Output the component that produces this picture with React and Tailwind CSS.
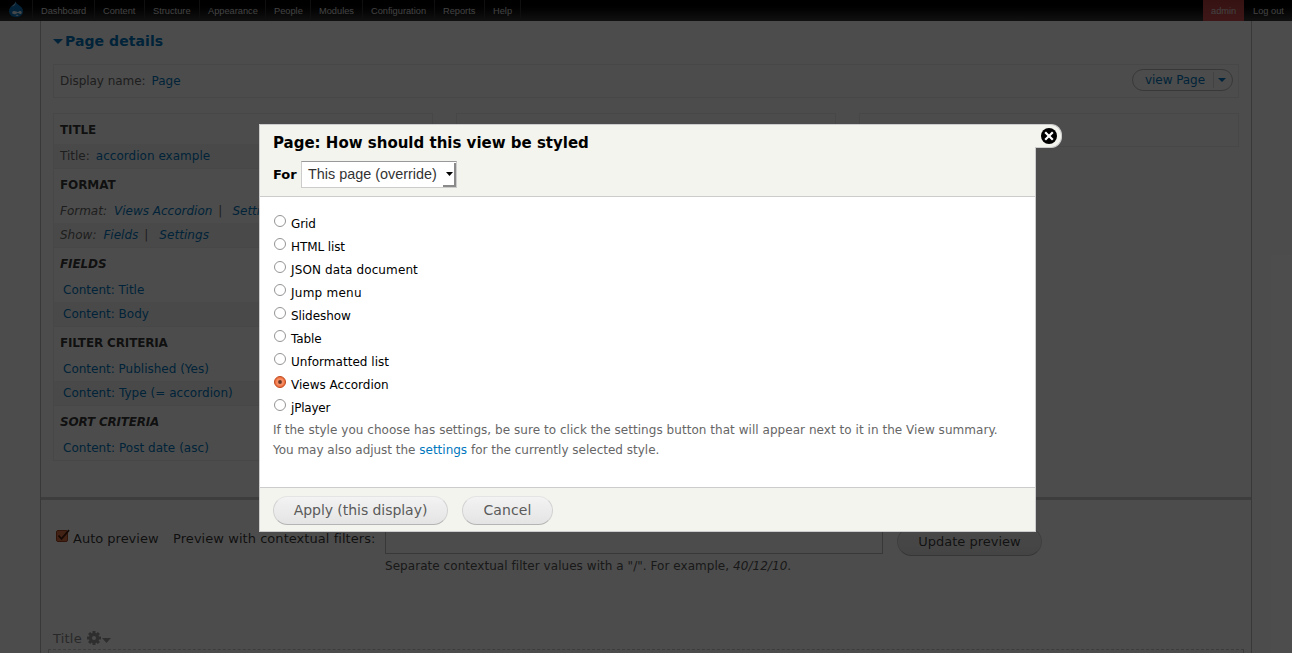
import React from "react";

const MENU = [
  ["Dashboard", "w-[62px]"],
  ["Content", "w-[50px]"],
  ["Structure", "w-[55px]"],
  ["Appearance", "w-[66px]"],
  ["People", "w-[45px]"],
  ["Modules", "w-[52px]"],
  ["Configuration", "w-[72px]"],
  ["Reports", "w-[50px]"],
  ["Help", "w-[37px] border-r"],
];

const STYLES = [
  ["Grid", "tracking-[-0.1px]"],
  ["HTML list", "tracking-[-0.1px]"],
  ["JSON data document", "tracking-[0.12px]"],
  ["Jump menu", "tracking-[0.25px]"],
  ["Slideshow", "tracking-[-0.06px]"],
  ["Table", "tracking-[-0.1px]"],
  ["Unformatted list", "tracking-[0.03px]"],
  ["Views Accordion", ""],
  ["jPlayer", "tracking-[-0.2px]"],
];

function Link({ children, className = "" }) {
  return (
    <a href="#" className={`text-[#0077be] ${className}`}>
      {children}
    </a>
  );
}

function DropletLogo() {
  return (
    <svg className="mb-[3px] ml-[8px] h-[17px] w-[16px] shrink-0" viewBox="0 0 16 17">
      <path
        d="M7.6 0.6C8 2.2 9.4 3.1 11 4.2C13.400 5.800 15 7.500 15 10.300C15 13.900 12 16.200 8.200 16.200C4.200 16.200 1 13.800 1 10.100C1 7.300 2.800 5.500 4.800 4.200C6.400 3.100 7.300 2.200 7.600 0.600Z"
        fill="#0a74bb"
      />
      <path d="M7.600 0.600C7.500 2.600 5 4.200 3.300 5.800L6.200 4.700C7.500 3.800 8 2.200 7.600 0.600Z" fill="#9fc9e6" />
      <path
        d="M4.200 11.600C4.600 10 6.700 9.700 8.300 10.600C9.300 11.200 9.700 11.300 10.800 10.500C12.200 9.600 13.800 10.100 13.700 11.700C13.600 13.100 12 13.300 10.800 12.500C9.800 11.900 9.400 12 8.300 12.700C6.500 13.800 3.900 13.300 4.200 11.600Z"
        fill="#e4eef5"
      />
      <path d="M7.500 14.300C8.600 13.700 9.600 13.700 10.800 14.300C10 15.200 8.500 15.200 7.500 14.300Z" fill="#cfe2ef" />
    </svg>
  );
}

function Toolbar() {
  return (
    <nav className="flex h-[21px] items-center bg-gradient-to-b from-black to-[#3a3a3a] font-['Liberation_Sans',sans-serif] text-[9.25px] text-[#ddd]">
      <DropletLogo />
      <ul className="ml-[8px] flex h-full">
        {MENU.map(([label, cls]) => (
          <li key={label} className={`flex h-full items-center border-l border-[#353535] pt-[2px] pl-[8px] ${cls}`}>
            {label}
          </li>
        ))}
      </ul>
      <div className="ml-auto flex h-full">
        <span className="flex w-[41px] items-center bg-gradient-to-b from-[#b83e3e] to-[#cf5050] pt-[2px] pl-[8px]">admin</span>
        <span className="flex w-[48px] items-center pt-[2px] pl-[9px]">Log out</span>
      </div>
    </nav>
  );
}

function Section({ title, className = "", children }) {
  return (
    <section className="border-b border-[#ededed]">
      <h3 className={`h-[30px] pl-[6px] text-[12px] leading-[33px] font-bold text-black/80 ${className}`}>{title}</h3>
      {children}
    </section>
  );
}

function Row({ shaded, italic, inset, children }) {
  return (
    <div
      className={`h-[24px] leading-[24px] whitespace-pre ${shaded ? "bg-[#f6f6f6]" : ""} ${italic ? "italic" : ""} ${
        inset ? "pl-[9px]" : "pl-[6px]"
      }`}
    >
      {children}
    </div>
  );
}

function Columns() {
  return (
    <div className="mt-[15px] flex h-[382px] items-start gap-[23px] text-[12px] text-[#666]">
      <div className="h-[348px] w-[380px] border border-b-0 border-[#ededed]">
        <Section title="TITLE" className="tracking-[-0.1px]">
          <Row shaded>
            Title:<Link className="ml-[6px] tracking-[0.03px]">accordion example</Link>
          </Row>
        </Section>
        <Section title="FORMAT" className="tracking-[-0.1px]">
          <Row italic>
            Format:<Link className="ml-[7px]">Views Accordion</Link>
            <span className="ml-[6px]">|</span>
            <Link className="ml-[10px]">Settings</Link>
          </Row>
          <Row italic shaded>
            Show:<Link className="ml-[7px]">Fields</Link>
            <span className="ml-[6px]">|</span>
            <Link className="ml-[11px] tracking-[0.06px]">Settings</Link>
          </Row>
        </Section>
        <Section title="FIELDS" className="tracking-[-0.1px] italic">
          <Row inset>
            <Link>Content: Title</Link>
          </Row>
          <Row inset shaded>
            <Link>Content: Body</Link>
          </Row>
        </Section>
        <Section title="FILTER CRITERIA" className="tracking-[-0.15px]">
          <Row inset>
            <Link>Content: Published (Yes)</Link>
          </Row>
          <Row inset shaded>
            <Link className="tracking-[0.04px]">Content: Type (= accordion)</Link>
          </Row>
        </Section>
        <Section title="SORT CRITERIA" className="tracking-[-0.2px] italic">
          <Row inset>
            <Link className="tracking-[0.04px]">Content: Post date (asc)</Link>
          </Row>
        </Section>
      </div>
      <div className="h-[34px] w-[380px] border border-[#ededed]" />
      <div className="h-[34px] w-[380px] border border-[#ededed]" />
    </div>
  );
}

function PillButton({ children, className = "" }) {
  return (
    <button
      className={`flex h-[29px] items-center justify-center rounded-full border border-[#d2d2d2] border-t-[#e4e4e4] border-b-[#b4b4b4] bg-gradient-to-b from-[#f3f3f3] to-[#e4e4e4] text-[#5a5a5a] ${className}`}
    >
      {children}
    </button>
  );
}

function GearIcon() {
  return (
    <svg className="ml-[5px] h-[14px] w-[14px]" viewBox="-7 -7 14 14" fill="#999">
      {[0, 45, 90, 135].map((a) => (
        <rect key={a} x="-1.500" y="-7" width="3" height="14" transform={`rotate(${a})`} />
      ))}
      <circle r="5.200" />
      <circle r="2" fill="#fff" />
    </svg>
  );
}

function Preview() {
  return (
    <div className="flex flex-1 flex-col text-[13px] text-black/80">
      <div className="flex h-[56px] items-end pl-[15px]">
        <svg className="mb-[13px] h-[14px] w-[14px] shrink-0" viewBox="0 0 14 14">
          <rect x="0.500" y="1.500" width="11" height="11" rx="1.500" fill="#e0724c" stroke="#a3441f" />
          <path d="M2.500 6.500L5.500 9.800L13 1.200" fill="none" stroke="#4a2010" strokeWidth="1.800" />
        </svg>
        <span className="ml-[3px] leading-[34px] whitespace-nowrap">Auto preview</span>
        <span className="ml-[14.5px] leading-[34px] tracking-[0.05px] whitespace-nowrap">Preview with contextual filters:</span>
        <div className="mb-[2px] ml-auto h-[27px] w-[498px] shrink-0 border border-[#bbb]" />
        <PillButton className="mr-[209px] ml-[14px] w-[145px] shrink-0 text-black/75">Update preview</PillButton>
      </div>
      <p className="pl-[344px] text-[12px] leading-[20px] tracking-[0.05px] text-[#555]">
        Separate contextual filter values with a "/". For example, <em>40/12/10</em>.
      </p>
      <div className="mt-[52px] flex h-[20px] items-center pl-[12px] tracking-[0.2px] text-[#888]">
        <span className="mt-px">Title</span>
        <GearIcon />
        <svg className="mt-[5px] ml-px h-[5px] w-[9px]" viewBox="0 0 9 5">
          <path d="M0 0H9L4.500 5Z" fill="#999" />
        </svg>
      </div>
      <div className="mx-[7px] mt-px h-[4px] border border-b-0 border-dashed border-[#c8c8c8]" />
    </div>
  );
}

function Page() {
  return (
    <main className="mx-[40px] flex h-[632px] w-[1212px] flex-col border-x border-[#bbb]">
      <div className="h-[479px] border-b-[3px] border-[#ccc] px-[12px]">
        <h2 className="flex h-[43px] items-center pb-[3px] text-[14px] font-bold">
          <svg className="mr-[2px] h-[5px] w-[10px]" viewBox="0 0 10 5">
            <path d="M0 0H10L5 5Z" fill="#0077be" />
          </svg>
          <Link className="tracking-[0.08px]">Page details</Link>
        </h2>
        <div className="flex h-[34px] items-center border border-[#ededed] pr-[5px] pl-[6px] text-[12px] text-[#666]">
          <span className="tracking-[-0.05px]">Display name:</span>
          <Link className="ml-[6px]">Page</Link>
          <div className="mb-[2px] ml-auto flex h-[22px] w-[101px] items-center rounded-full border border-[#bbb] pl-[12px]">
            <Link className="w-[60px] tracking-[-0.06px] whitespace-nowrap">view Page</Link>
            <span className="ml-[8px] h-[16px] w-px bg-[#ddd]" />
            <svg className="ml-[4px] h-[4px] w-[8px]" viewBox="0 0 8 4">
              <path d="M0 0H8L4 4Z" fill="#0077be" />
            </svg>
          </div>
        </div>
        <Columns />
      </div>
      <Preview />
    </main>
  );
}

function Radio({ checked }) {
  return (
    <svg className="h-[12px] w-[12px] shrink-0" viewBox="0 0 12 12">
      <circle cx="6" cy="6" r="5.500" fill={checked ? "#f0743f" : "#fff"} stroke={checked ? "#bd4a22" : "#949494"} />
      {checked && <circle cx="6" cy="6" r="3.800" fill="#f58e66" />}
      {checked && <circle cx="6" cy="6" r="1.900" fill="#6b3a26" />}
    </svg>
  );
}

function Modal() {
  return (
    <div className="absolute top-[124px] left-[259px] flex items-start">
      <div className="flex h-[408px] w-[777px] flex-col border border-[#ccc] bg-white">
        <header className="h-[72px] border-b border-[#ccc] bg-[#f3f4ee] pl-[13px] text-black">
          <h1 className="h-[36px] text-[15px] leading-[36px] font-bold">Page: How should this view be styled</h1>
          <div className="flex h-[27px] items-center">
            <label className="w-[28px] text-[13px] font-bold">For</label>
            <div className="flex h-[27px] w-[156px] items-center border border-[#ccc] border-t-[#999] bg-white pl-[6px] font-['Liberation_Sans',sans-serif] text-[14.4px] text-[#333]">
              <span className="whitespace-nowrap">This page (override)</span>
              <span className="mt-px ml-auto flex h-[24px] w-[13px] items-center justify-end border-r-2 border-b-2 border-[#8a8a8a] bg-white pr-px">
                <svg className="h-[4px] w-[7px]" viewBox="0 0 7 4">
                  <path d="M0 0H7L3.500 4Z" fill="#000" />
                </svg>
              </span>
            </div>
          </div>
        </header>
        <div className="flex-1 pt-[12px] pl-[13px] text-[12px]">
          {STYLES.map(([name, tracking]) => (
            <div key={name} className="flex h-[23px] items-center pl-px text-black">
              <Radio checked={name === "Views Accordion"} />
              <span className={`mt-[6px] ml-[5px] leading-[16px] ${tracking}`}>{name}</span>
            </div>
          ))}
          <p className="mt-[4px] leading-[20px] text-[#666]">
            <span className="tracking-[0.044px]">
              If the style you choose has settings, be sure to click the settings button that will appear next to it in the View summary.
            </span>
            <br />
            <span className="tracking-[-0.02px]">You may also adjust the </span>
            <Link>settings</Link> for the currently selected style.
          </p>
        </div>
        <footer className="flex h-[44px] gap-[14px] border-t border-[#ccc] bg-[#f3f4ee] pt-[8px] pl-[13px] text-[14px]">
          <PillButton className="w-[175px] tracking-[-0.05px]">Apply (this display)</PillButton>
          <PillButton className="w-[91px] tracking-[0.1px]">Cancel</PillButton>
        </footer>
      </div>
      <button className="-ml-px flex h-[24px] w-[27px] items-center justify-center rounded-r-[11px] border border-l-0 border-[#ccc] bg-[#f3f4ee] pl-[2px]">
        <svg className="h-[16px] w-[16px]" viewBox="0 0 16 16">
          <circle cx="8" cy="8" r="8" fill="#000" />
          <path d="M4.200 4.200L11.800 11.800M11.800 4.200L4.200 11.800" stroke="#fff" strokeWidth="2.200" />
        </svg>
      </button>
    </div>
  );
}

export default function App() {
  return (
    <div className="relative h-[653px] w-[1292px] overflow-hidden bg-white font-['DejaVu_Sans',sans-serif]">
      <Toolbar />
      <Page />
      <div className="absolute inset-0 bg-black/70" />
      <Modal />
    </div>
  );
}
